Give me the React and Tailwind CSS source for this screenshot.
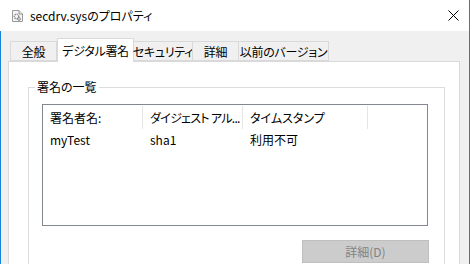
import React from "react";

const font = { fontFamily: '"Noto Sans CJK JP", "Noto Sans", sans-serif' };

function FileIcon() {
  return (
    <svg width="11" height="12" viewBox="0 0 11 12" className="shrink-0">
      <path d="M0.5 0.5 H7 L10.5 4 V11.5 H0.5 Z" fill="#f4f4f4" stroke="#9a9a9a" />
      <path d="M7 0.5 V4 H10.5" fill="#e0e0e0" stroke="#9a9a9a" />
      <circle cx="4.5" cy="6.5" r="2.2" fill="none" stroke="#8a8a8a" strokeWidth="1.4" strokeDasharray="1.2 0.7" />
      <circle cx="7" cy="9" r="1.4" fill="none" stroke="#8a8a8a" strokeWidth="1" />
    </svg>
  );
}

export default function App() {
  const tabs = [
    { label: "全般", w: "w-[47px]" },
    { label: "デジタル署名", w: "w-[77px]", sel: true },
    { label: "セキュリティ", w: "w-[60px]" },
    { label: "詳細", w: "w-[47px]" },
    { label: "以前のバージョン", w: "w-[91px]" },
  ];
  return (
    <div
      className="w-[470px] h-[264px] overflow-hidden bg-[#f0f0f0] flex flex-col border-r border-[#1883d7] text-[12px] text-black whitespace-nowrap [font-feature-settings:'palt']"
      style={font}
    >
      {/* Title bar */}
      <div className="h-[31px] bg-white flex items-center shrink-0">
        <div className="ml-[12px] mt-[1px]">
          <FileIcon />
        </div>
        <span className="ml-[7px] text-[12px] leading-none">secdrv.sysのプロパティ</span>
        <svg width="11" height="11" viewBox="0 0 11 11" className="ml-auto mr-[10px]">
          <path d="M0.5 0.5 L10.5 10.5 M10.5 0.5 L0.5 10.5" stroke="#000" strokeWidth="1" />
        </svg>
      </div>

      {/* Body */}
      <div className="flex-1 border-l border-[#1883d7] pl-[7px] pr-[9px] pt-[8px] flex flex-col">
        {/* Tabs */}
        <div className="flex items-end h-[22px] ml-[2px] relative z-10">
          {tabs.map((t, i) =>
            t.sel ? (
              <div
                key={i}
                className={`${t.w} h-[24px] -mb-[1px] bg-white border border-b-0 border-[#d9d9d9] flex items-center justify-center tracking-[-0.3px]`}
              >
                {t.label}
              </div>
            ) : (
              <div
                key={i}
                className={`${t.w} h-[20px] bg-[#f0f0f0] border border-[#d9d9d9] -ml-[1px] first:ml-0 flex items-center justify-center pt-[1px] tracking-[-0.3px]`}
              >
                {t.label}
              </div>
            )
          )}
        </div>

        {/* Panel */}
        <div className="flex-1 bg-white border border-[#d9d9d9] pl-[19px] pr-[14px] pt-[25px]">
          {/* Group box */}
          <div className="relative border border-[#dcdcdc] border-b-0 h-[200px] pl-[13px] pr-[16px] pt-[16px]">
            <span className="absolute -top-[9px] left-[6px] bg-white px-[2px] leading-[16px]">
              署名の一覧
            </span>
            {/* List view */}
            <div className="h-[122px] border border-[#828790] bg-white flex flex-col">
              <div className="flex h-[24px] items-center pt-[1px]">
                <div className="w-[100px] h-full pl-[7px] flex items-center border-r border-[#e5e5e5]">署名者名:</div>
                <div className="w-[100px] h-full pl-[7px] flex items-center border-r border-[#e5e5e5] tracking-[-0.7px]">
                  ダイジェスト アル...
                </div>
                <div className="w-[125px] h-full pl-[7px] flex items-center border-r border-[#e5e5e5]">
                  タイムスタンプ
                </div>
              </div>
              <div className="flex h-[22px] items-center">
                <div className="w-[100px] pl-[7px]">myTest</div>
                <div className="w-[100px] pl-[7px]">sha1</div>
                <div className="w-[125px] pl-[7px]">利用不可</div>
              </div>
            </div>
            {/* Button */}
            <div className="flex justify-end mt-[14px]">
              <div className="w-[127px] h-[23px] -mr-[1px] bg-[#cccccc] border border-[#bfbfbf] text-[#838383] flex items-center justify-center">
                詳細(D)
              </div>
            </div>
          </div>
        </div>
      </div>
    </div>
  );
}
